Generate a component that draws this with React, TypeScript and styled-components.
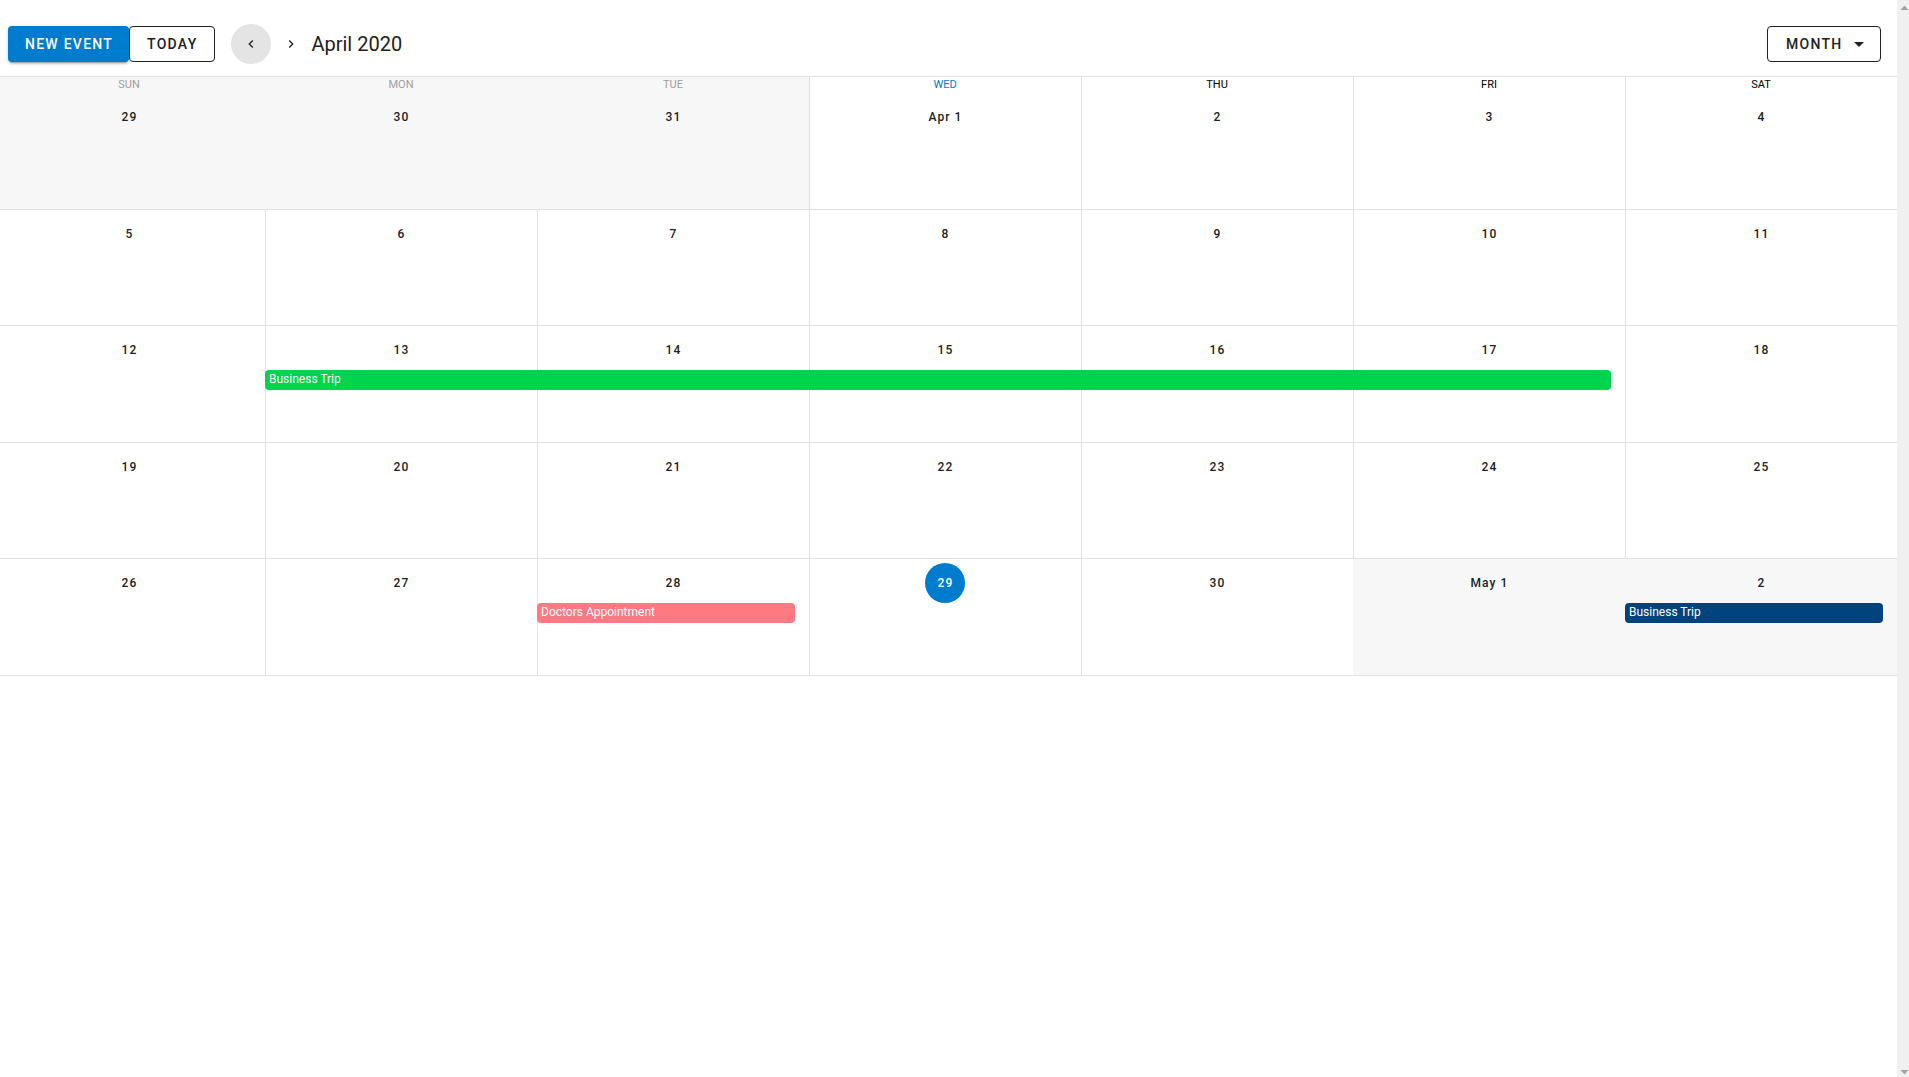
import React from "react";
import styled, { createGlobalStyle } from "styled-components";

const color = {
  primary: "#007ccf",
  text: "#212121",
  line: "#e0e0e0",
  outside: "#f7f7f7",
  muted: "#9e9e9e",
  hover: "#e4e4e4",
  track: "#f0f0f0",
  arrow: "#a3a3a3",
};

const GlobalStyle = createGlobalStyle`
  *, *::before, *::after { box-sizing: border-box; }
  body {
    margin: 0;
    background: #fff;
    color: ${color.text};
    font-family: Roboto, "Liberation Sans", sans-serif;
  }
  button, select { font-family: inherit; }
`;

const Page = styled.div`
  display: flex;
  height: 100vh;
  overflow: hidden;
`;

const Main = styled.main`
  flex: 1;
  min-width: 0;
  margin-left: -7px;
  padding-top: 12px;
`;

const Toolbar = styled.header`
  display: flex;
  align-items: center;
  height: 64px;
  padding: 0 16px 0 15px;
`;

const Button = styled.button<{ $filled?: boolean }>`
  height: 36px;
  padding: ${(p) => (p.$filled ? "0 16px 0 17px" : "0 17px")};
  border: ${(p) => (p.$filled ? "0" : "1px solid currentColor")};
  border-radius: 4px;
  background: ${(p) => (p.$filled ? color.primary : "transparent")};
  color: ${(p) => (p.$filled ? "#fff" : color.text)};
  box-shadow: ${(p) =>
    p.$filled
      ? "0 3px 1px -2px rgba(0,0,0,.2), 0 2px 2px 0 rgba(0,0,0,.14), 0 1px 5px 0 rgba(0,0,0,.12)"
      : "none"};
  font-size: 14px;
  font-weight: 500;
  letter-spacing: 0.09em;
  text-transform: uppercase;
`;

const Pager = styled.nav`
  display: flex;
  margin-left: 16px;
`;

const IconButton = styled.button<{ $active?: boolean }>`
  display: grid;
  place-items: center;
  width: 40px;
  height: 40px;
  padding: 0;
  border: 0;
  border-radius: 50%;
  background: ${(p) => (p.$active ? color.hover : "transparent")};
  color: ${color.text};
`;

const Title = styled.h1`
  flex: 1;
  margin: 0;
  font-size: 20px;
  font-weight: 400;
  line-height: 30px;
`;

const ViewPicker = styled.label`
  display: grid;
  align-items: center;
  width: 114px;

  > * {
    grid-area: 1 / 1;
  }

  > svg {
    justify-self: end;
    margin-right: 10px;
    pointer-events: none;
  }
`;

const ViewSelect = styled.select`
  appearance: none;
  width: 100%;
  height: 36px;
  padding: 0 18px;
  border: 1px solid currentColor;
  border-radius: 4px;
  background: transparent;
  color: ${color.text};
  font-size: 14px;
  font-weight: 500;
  letter-spacing: 0.09em;
`;

const Calendar = styled.section`
  display: flex;
  flex-direction: column;
  min-height: 600px;
  border-top: 1px solid ${color.line};
`;

const Weekdays = styled.div`
  display: grid;
  grid-template-columns: repeat(7, 1fr);
`;

const Weekday = styled.div<{ $tone: "past" | "today" | "future" }>`
  height: 16px;
  box-shadow: ${(p) => (p.$tone === "past" ? "none" : `inset 1px 0 ${color.line}`)};
  background: ${(p) => (p.$tone === "past" ? color.outside : "#fff")};
  color: ${(p) =>
    p.$tone === "past" ? color.muted : p.$tone === "today" ? color.primary : "#000"};
  font-size: 11px;
  line-height: 16px;
  text-align: center;
`;

const Week = styled.div`
  flex: 1;
  display: grid;
  grid-template-columns: repeat(7, 1fr);
  grid-template-rows: 44px 20px 1fr;
  border-bottom: 1px solid ${color.line};
`;

const Day = styled.div<{ $column: number; $outside: boolean }>`
  grid-column: ${(p) => p.$column};
  grid-row: 1 / -1;
  display: flex;
  justify-content: center;
  align-items: flex-start;
  padding-top: 4px;
  box-shadow: ${(p) => (p.$outside ? "none" : `inset 1px 0 ${color.line}`)};
  background: ${(p) => (p.$outside ? color.outside : "transparent")};
`;

const DayButton = styled.button<{ $today: boolean }>`
  min-width: 40px;
  height: 40px;
  padding: 0 0 0 1px;
  border: 0;
  border-radius: 20px;
  background: ${(p) => (p.$today ? color.primary : "transparent")};
  color: ${(p) => (p.$today ? "#fff" : color.text)};
  font-size: 12px;
  font-weight: 500;
  letter-spacing: 0.09em;
`;

const EventBar = styled.button<{ $from: number; $to: number; $fill: string }>`
  grid-column: ${(p) => p.$from} / ${(p) => p.$to + 1};
  grid-row: 2;
  display: flex;
  align-items: flex-start;
  margin: 0 14px 0 0;
  padding: 0 4px;
  border: 0;
  border-radius: 4px;
  background: ${(p) => p.$fill};
  color: #fff;
  font-size: 12px;
  line-height: 18px;
  text-align: left;
`;

const ScrollTrack = styled.div`
  flex: 0 0 15px;
  display: flex;
  flex-direction: column;
  justify-content: space-between;
  margin-right: -3px;
  background: ${color.track};
`;

type Event = { name: string; from: number; to: number; fill: string };
type WeekData = { days: string[]; outside?: number[]; today?: number; events?: Event[] };

const weekdays = ["SUN", "MON", "TUE", "WED", "THU", "FRI", "SAT"];

const weeks: WeekData[] = [
  { days: ["29", "30", "31", "Apr 1", "2", "3", "4"], outside: [0, 1, 2] },
  { days: ["5", "6", "7", "8", "9", "10", "11"] },
  {
    days: ["12", "13", "14", "15", "16", "17", "18"],
    events: [{ name: "Business Trip", from: 2, to: 6, fill: "#00d44d" }],
  },
  { days: ["19", "20", "21", "22", "23", "24", "25"] },
  {
    days: ["26", "27", "28", "29", "30", "May 1", "2"],
    outside: [5, 6],
    today: 3,
    events: [
      { name: "Doctors Appointment", from: 3, to: 3, fill: "#ff7983" },
      { name: "Business Trip", from: 7, to: 7, fill: "#00437d" },
    ],
  },
];

const Icon = ({ d, size }: { d: string; size: number }) => (
  <svg width={size} height={size} viewBox="0 0 24 24" fill={color.text} aria-hidden="true">
    <path d={d} />
  </svg>
);

const Arrow = ({ points }: { points: string }) => (
  <svg width="15" height="16" viewBox="0 0 15 16" fill={color.arrow} aria-hidden="true">
    <polygon points={points} />
  </svg>
);

export default function App() {
  return (
    <>
      <GlobalStyle />
      <Page>
        <Main>
          <Toolbar>
            <Button $filled>New Event</Button>
            <Button>Today</Button>
            <Pager>
              <IconButton $active aria-label="Previous month">
                <Icon
                  size={16}
                  d="M15.41,16.58L10.83,12L15.41,7.41L14,6L8,12L14,18L15.41,16.58Z"
                />
              </IconButton>
              <IconButton aria-label="Next month">
                <Icon
                  size={16}
                  d="M8.59,16.58L13.17,12L8.59,7.41L10,6L16,12L10,18L8.59,16.58Z"
                />
              </IconButton>
            </Pager>
            <Title>April 2020</Title>
            <ViewPicker>
              <ViewSelect aria-label="Calendar view" defaultValue="month">
                <option value="month">MONTH</option>
              </ViewSelect>
              <Icon size={24} d="M7,10L12,15L17,10H7Z" />
            </ViewPicker>
          </Toolbar>
          <Calendar>
            <Weekdays>
              {weekdays.map((name, i) => (
                <Weekday key={name} $tone={i < 3 ? "past" : i === 3 ? "today" : "future"}>
                  {name}
                </Weekday>
              ))}
            </Weekdays>
            {weeks.map((week, w) => (
              <Week key={w}>
                {week.days.map((day, i) => (
                  <Day key={day} $column={i + 1} $outside={!!week.outside?.includes(i)}>
                    <DayButton $today={week.today === i}>{day}</DayButton>
                  </Day>
                ))}
                {week.events?.map((event) => (
                  <EventBar
                    key={event.name}
                    $from={event.from}
                    $to={event.to}
                    $fill={event.fill}
                  >
                    {event.name}
                  </EventBar>
                ))}
              </Week>
            ))}
          </Calendar>
        </Main>
        <ScrollTrack>
          <Arrow points="3.5,10 7.5,5.5 11.5,10" />
          <Arrow points="3.5,9 7.5,13.5 11.5,9" />
        </ScrollTrack>
      </Page>
    </>
  );
}
